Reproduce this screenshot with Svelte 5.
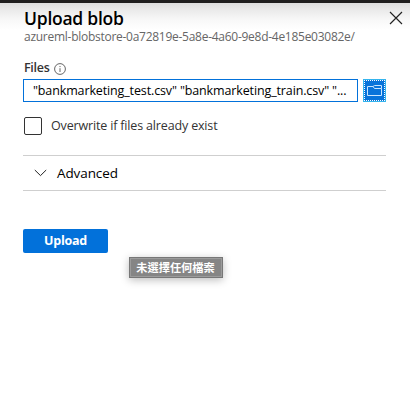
<script>
  const path = 'azureml-blobstore-0a72819e-5a8e-4a60-9e8d-4e185e03082e/';
  const files = '"bankmarketing_test.csv" "bankmarketing_train.csv" "...';
</script>

<main class="panel">
  <header>
    <div class="heading">
      <h1>Upload blob</h1>
      <p class="path">{path}</p>
    </div>
    <svg class="close" viewBox="0 0 14 14" width="14" height="14"><path d="M1 1L13 13M13 1L1 13" /></svg>
  </header>

  <div class="label">
    <span class="files">Files</span>
    <svg width="12" height="12" viewBox="0 0 12 12"><circle cx="6" cy="6" r="5.4" /><path d="M6 5.2V9M6 3v1.1" /></svg>
  </div>

  <div class="picker">
    <div class="input"><span>{files}</span></div>
    <div class="browse">
      <svg width="17" height="13" viewBox="0 0 17 13"><path d="M1.5 2.5H7L8.5 4.5H15.5V11.5H1.5ZM7 2.5L8.5 1.5H15.5V4.5" /></svg>
    </div>
  </div>

  <div class="check"><span class="box"></span><span class="checktext">Overwrite if files already exist</span></div>

  <section class="advanced">
    <svg width="13" height="8" viewBox="0 0 13 8"><path d="M.8 1L6.5 6.6L12.2 1" /></svg>
    <span>Advanced</span>
  </section>

  <div class="button"><span>Upload</span></div>
  <div class="tooltip">未選擇任何檔案</div>
</main>

<style>
  :global(body) { background: #fff; }
  .panel {
    box-sizing: border-box;
    position: relative;
    width: 410px;
    height: 418px;
    padding: 6px 24px 0 23px;
    border-top: 3px solid #201f1f;
    overflow: hidden;
    background: linear-gradient(#dedede 0, #e9e9e9 6px, #f8f8f8 17px, #fff 27px);
    font-family: "Open Sans", "Noto Sans", sans-serif;
    color: #000;
    white-space: nowrap;
  }
  h1, p { margin: 0; }
  header { display: flex; height: 50px; }
  .heading { width: 365px; flex: none; padding-left: 1px; }
  h1 { height: 20px; font-size: 17.5px; line-height: 18px; font-weight: 600; letter-spacing: -.25px; }
  .path { font-size: 12px; line-height: 16px; color: #666; letter-spacing: -.27px; }
  .close { flex: none; margin-top: 2px; }
  svg { fill: none; stroke: #222; display: block; }
  .close { stroke-width: 1.15; }
  .label { display: flex; height: 20px; line-height: 18px; font-size: 12.5px; font-weight: 600; color: #333; padding-left: 1px; }
  .files { width: 25px; letter-spacing: -.3px; }
  .label svg { margin: 4px 0 0 5px; stroke: #555; stroke-width: .9; }
  .picker { display: flex; gap: 5px; height: 23px; }
  .input { box-sizing: border-box; width: 335px; border: 1px solid #0271da; background: #fff; padding-left: 9px; font-size: 12.5px; line-height: 21px; letter-spacing: -.13px; }
  .browse { box-sizing: border-box; width: 23px; height: 23px; display: grid; place-items: center; background: #0873da; border: 1px solid #35b5ee; }
  .browse { outline: 1px dotted #fff; outline-offset: -2px; }
  .browse svg { stroke: #c9e5ff; stroke-width: 1; }
  .check { display: flex; height: 18px; margin-top: 15px; padding-left: 1px; }
  .box { box-sizing: border-box; width: 18px; height: 18px; border: 1px solid #333; border-radius: 2px; }
  .checktext { margin-left: 9px; font-size: 12.5px; line-height: 17px; color: #333; letter-spacing: -.16px; }
  .advanced { box-sizing: border-box; display: flex; align-items: center; height: 36px; margin-top: 20px; padding-left: 11px; border: solid #cfcfcf; border-width: 1px 0; font-size: 13.5px; letter-spacing: -.1px; }
  .advanced svg { margin-right: 10px; }
  .button { display: grid; place-items: center; width: 85px; height: 24px; margin-top: 38px; border-radius: 2px; background: #0271da; color: #fff; font-size: 12.5px; font-weight: 700; letter-spacing: -.25px; }
  .button span { margin-top: -1px; }
  .tooltip { box-sizing: border-box; width: 94px; height: 21px; margin: 4px 0 0 106px; padding-right: 1px; border: 1px solid #777; background: #858585; box-shadow: inset 0 0 0 1px #9b9b9b, 0 2px 8px #0004; color: #fff; font: 700 11.2px/18px "Noto Sans CJK TC", sans-serif; text-align: center; }
</style>
